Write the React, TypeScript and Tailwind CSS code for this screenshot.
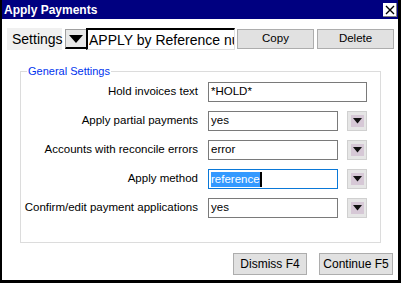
import React from "react";

function SmallDrop() {
  return (
    <div className="w-[20px] h-[20px] ml-[9px] bg-[#e6e6e6] border border-[#d0d0d0] flex items-center justify-center">
      <div className="w-[13px] h-[12px] bg-[#d6c8d6] flex items-center justify-center">
        <svg width="9" height="6" viewBox="0 0 9 6">
          <polygon points="0,0 9,0 4.5,5.5" fill="#111" />
        </svg>
      </div>
    </div>
  );
}

function Row({ label, value, drop, focus }: { label: string; value: string; drop?: boolean; focus?: boolean }) {
  return (
    <div className="flex items-center h-[20px]">
      <div className="w-[187px] shrink-0 text-right pr-[10px] text-[11.5px] text-black whitespace-nowrap">{label}</div>
      <div
        className={`h-[20px] flex items-center px-[2px] text-[11.5px] bg-white ${
          drop ? "w-[130px]" : "w-[159px]"
        } ${focus ? "border border-[#0a78d7]" : "border border-[#7a7a7a]"}`}
      >
        {focus ? <span className="bg-[#3399ff] text-white border-r-2 border-black leading-[15px]">{value}</span> : value}
      </div>
      {drop && <SmallDrop />}
    </div>
  );
}

export default function App() {
  return (
    <div
      className="w-[401px] h-[283px] bg-white border-l-2 border-r-[3px] border-b-[3px] border-black flex flex-col"
      style={{ fontFamily: '"Liberation Sans", Arial, sans-serif' }}
    >
      <div className="h-[19px] bg-[#000080] flex items-center justify-between pl-[2px] pr-[1px]">
        <div className="text-white font-bold text-[12px]">Apply Payments</div>
        <div className="w-[14px] h-[14px] bg-white border-r border-b border-[#808080] flex items-center justify-center mt-[1px]">
          <svg width="10" height="10" viewBox="0 0 10 10">
            <path d="M1 1 L9 9 M9 1 L1 9" stroke="#000" strokeWidth="1.4" />
          </svg>
        </div>
      </div>

      <div className="flex items-center mt-[9px] ml-[5px] h-[22px]">
        <div className="h-[22px] w-[55px] bg-[#f0f0f0] flex items-center pl-[5px] text-[14px] text-black">Settings</div>
        <div className="ml-[3px] w-[21px] h-[20px] bg-[#e8e8e8] border-l border-t border-[#a0a0a0] border-b-2 border-r-0 border-b-black flex items-center justify-center">
          <svg width="14" height="8" viewBox="0 0 14 8">
            <polygon points="0,0 14,0 7,8" fill="#000" />
          </svg>
        </div>
        <input
          readOnly
          value="APPLY by Reference number"
          className="w-[149px] h-[22px] border-l-2 border-t-2 border-black border-b border-r border-b-[#e0e0e0] border-r-[#e0e0e0] bg-white pl-[1px] text-[14px] text-black outline-none"
          style={{ fontFamily: '"Liberation Sans", Arial, sans-serif' }}
        />
        <div className="ml-[2px] w-[77px] h-[20px] bg-[#e1e1e1] border border-[#adadad] flex items-center justify-center text-[11.5px] text-black">Copy</div>
        <div className="ml-[3px] w-[77px] h-[20px] bg-[#e1e1e1] border border-[#adadad] flex items-center justify-center text-[11.5px] text-black">Delete</div>
      </div>

      <div className="relative mt-[21px] ml-[18px] w-[361px] h-[172px] border border-[#dcdcdc]">
        <div className="absolute -top-[8px] left-[6px] bg-white px-[1px] text-[11px] text-[#0033ee] leading-[14px]">General Settings</div>
        <div className="flex flex-col gap-[9px] pt-[10px]">
          <Row label="Hold invoices text" value="*HOLD*" />
          <Row label="Apply partial payments" value="yes" drop />
          <Row label="Accounts with reconcile errors" value="error" drop />
          <Row label="Apply method" value="reference" drop focus />
          <Row label="Confirm/edit payment applications" value="yes" drop />
        </div>
      </div>

      <div className="flex justify-end gap-[12px] mt-[10px] pr-[5px]">
        <div className="w-[74px] h-[22px] bg-[#e1e1e1] border border-[#adadad] flex items-center justify-center text-[12px] text-black">Dismiss F4</div>
        <div className="w-[74px] h-[22px] bg-[#e1e1e1] border border-[#adadad] flex items-center justify-center text-[12px] text-black">Continue F5</div>
      </div>
    </div>
  );
}
